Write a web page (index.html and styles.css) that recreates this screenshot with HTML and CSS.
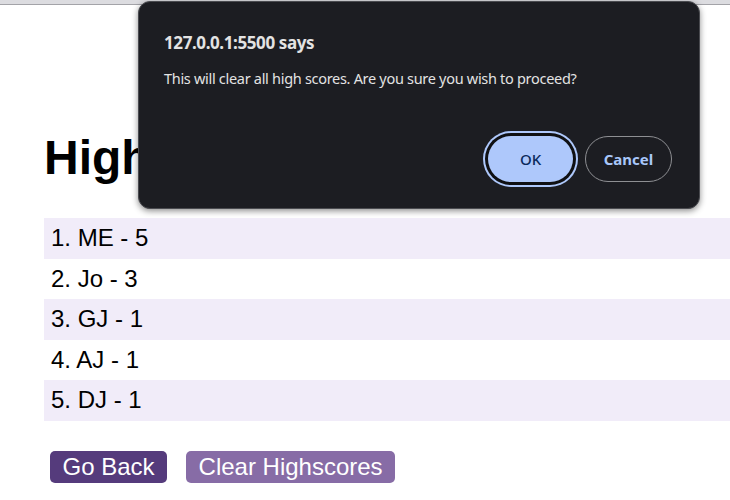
FILE: index.html
```html
<!DOCTYPE html>
<html lang="en">
<head>
<meta charset="utf-8">
<title>Highscores</title>
<link rel="stylesheet" href="styles.css">
</head>
<body>
<div class="chrome"></div>
<main class="page">
  <h1 class="title">Highscores</h1>
  <ol class="scores">
    <li class="score">1. ME - 5</li>
    <li class="score">2. Jo - 3</li>
    <li class="score">3. GJ - 1</li>
    <li class="score">4. AJ - 1</li>
    <li class="score">5. DJ - 1</li>
  </ol>
  <div class="actions">
    <button class="btn btn-back">Go Back</button>
    <button class="btn btn-clear">Clear Highscores</button>
  </div>
</main>
<div class="dialog">
  <div class="dialog-title">127.0.0.1:5500 says</div>
  <div class="dialog-msg">This will clear all high scores. Are you sure you wish to proceed?</div>
  <div class="dialog-buttons">
    <button class="dbtn dbtn-ok">OK</button>
    <button class="dbtn dbtn-cancel">Cancel</button>
  </div>
</div>
</body>
</html>
```
FILE: styles.css
```css
html, body {
  margin: 0;
  padding: 0;
  background: #ffffff;
  width: 730px;
  height: 500px;
  overflow: hidden;
}
body {
  font-family: "Liberation Sans", Arial, sans-serif;
  color: #000;
}
.chrome {
  height: 4px;
  background: #dcdce0;
  border-bottom: 1px solid #a3a3a8;
}
.page {
  padding-left: 44px;
}
.title {
  font-size: 48px;
  font-weight: bold;
  line-height: 55px;
  margin: 125px 0 33px;
}
.scores {
  list-style: none;
  margin: 0;
  padding: 0;
}
.score {
  font-size: 24px;
  line-height: 28.6px;
  padding: 6px 7px;
}
.score:nth-child(odd) {
  background: #f1ecf9;
}
.actions {
  display: flex;
  gap: 19px;
  margin: 30px 0 0 6px;
}
.btn {
  font-family: "Liberation Sans", Arial, sans-serif;
  font-size: 24px;
  line-height: 28px;
  color: #fff;
  border: none;
  border-radius: 5px;
  padding: 2px 12.5px;
  height: 32px;
}
.btn-back {
  background: #553b7c;
}
.btn-clear {
  background: #876ca6;
}
.dialog {
  position: absolute;
  left: 138px;
  top: 1px;
  width: 562px;
  height: 208px;
  box-sizing: border-box;
  background: #1c1d22;
  border: 1px solid #4a4b50;
  border-radius: 12px;
  box-shadow: 0 2px 6px rgba(0, 0, 0, 0.45);
  padding: 30px 27px 0 25px;
  font-family: "Noto Sans", "Open Sans", sans-serif;
  color: #e3e3e3;
}
.dialog-title {
  font-size: 17px;
  font-weight: bold;
  line-height: 22px;
  letter-spacing: -0.4px;
}
.dialog-msg {
  font-size: 14.5px;
  line-height: 20px;
  letter-spacing: -0.3px;
  margin-top: 14px;
}
.dialog-buttons {
  display: flex;
  justify-content: flex-end;
  align-items: center;
  gap: 12px;
  margin-top: 48px;
}
.dbtn {
  font-family: "Noto Sans", "Open Sans", sans-serif;
  font-size: 15px;
  border-radius: 999px;
  height: 46px;
  box-sizing: border-box;
  padding: 0;
}
.dbtn-ok {
  width: 85px;
  background: #aec8fb;
  color: #0b2a5c;
  border: none;
  font-weight: 500;
  box-shadow: 0 0 0 3px #0f1013, 0 0 0 5px #aec8fb;
}
.dbtn-cancel {
  width: 87px;
  background: transparent;
  color: #a8c7fa;
  border: 1px solid #8e8f93;
  font-weight: bold;
}
```
